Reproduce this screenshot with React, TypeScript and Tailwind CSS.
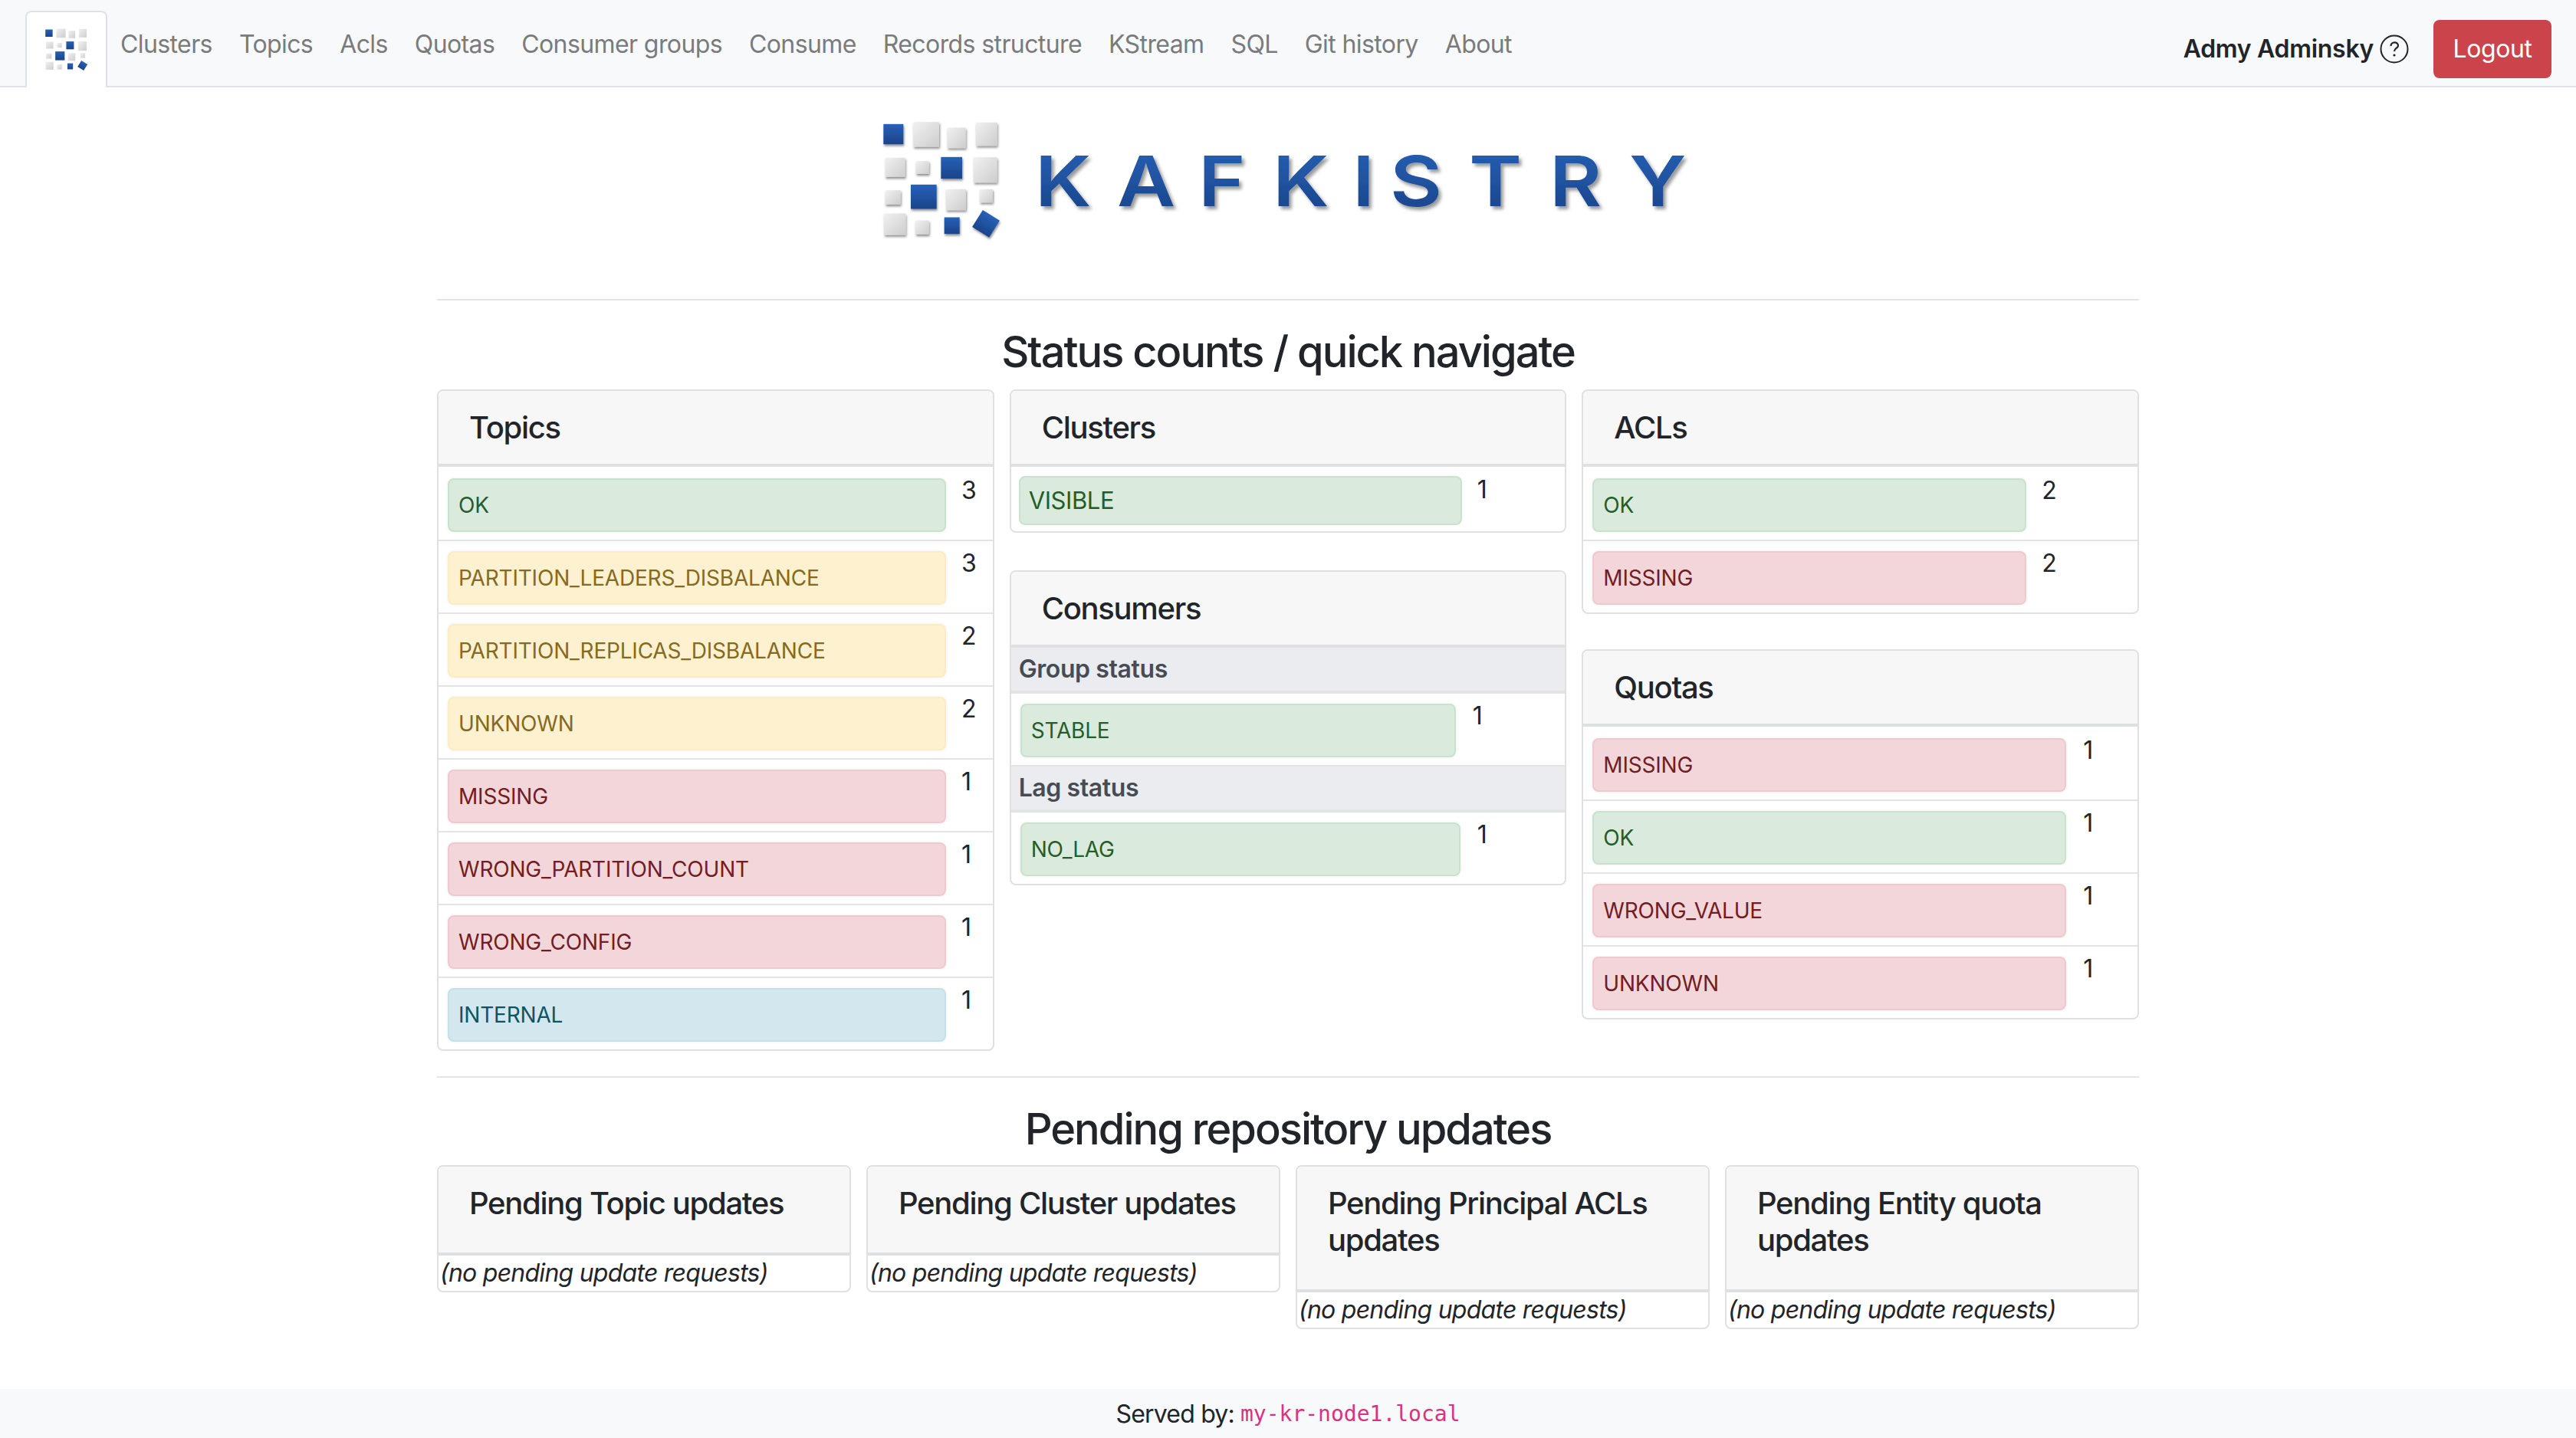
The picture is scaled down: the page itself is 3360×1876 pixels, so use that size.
const navLinks = ["Clusters", "Topics", "Acls", "Quotas", "Consumer groups", "Consume", "Records structure", "KStream", "SQL", "Git history", "About"];

const tones: Record<string, string> = {
  green: "bg-[#daebdd] border-[#c8e2cc] text-[#255d2a]",
  yellow: "bg-[#fdf1d0] border-[#fbecc4] text-[#856a22]",
  red: "bg-[#f2d6d9] border-[#efc9cd] text-[#721c24]",
  blue: "bg-[#d3e8ee] border-[#c3e0e8] text-[#0f5463]",
};

const topics = [
  ["OK", "green", 3],
  ["PARTITION_LEADERS_DISBALANCE", "yellow", 3],
  ["PARTITION_REPLICAS_DISBALANCE", "yellow", 2],
  ["UNKNOWN", "yellow", 2],
  ["MISSING", "red", 1],
  ["WRONG_PARTITION_COUNT", "red", 1],
  ["WRONG_CONFIG", "red", 1],
  ["INTERNAL", "blue", 1],
] as const;

const acls = [
  ["OK", "green", 2],
  ["MISSING", "red", 2],
] as const;

const quotas = [
  ["MISSING", "red", 1],
  ["OK", "green", 1],
  ["WRONG_VALUE", "red", 1],
  ["UNKNOWN", "red", 1],
] as const;

const pending = ["Pending Topic updates", "Pending Cluster updates", "Pending Principal ACLs updates", "Pending Entity quota updates"];

const grays = [
  [187, 55, 101, 97], [320, 77, 72, 80], [432, 57, 83, 91],
  [77, 195, 78, 75], [197, 208, 51, 50], [423, 193, 92, 99],
  [77, 322, 60, 56], [315, 318, 78, 82], [447, 318, 51, 52],
  [72, 413, 85, 84], [195, 440, 53, 55],
];
const blues = [
  [70, 63, 78, 79], [295, 192, 83, 85], [177, 300, 101, 95], [308, 428, 60, 65],
];

function LogoMark({ id, className, shadow }: { id: string; className: string; shadow?: boolean }) {
  return (
    <svg viewBox="60 45 480 475" className={className}>
      <defs>
        <linearGradient id={`${id}-b`} x1="0" y1="0" x2="0" y2="1">
          <stop offset="0" stopColor="#2761b8" />
          <stop offset="1" stopColor="#1b4488" />
        </linearGradient>
        <linearGradient id={`${id}-g`} x1="0" y1="0" x2="1" y2="1">
          <stop offset="0" stopColor="#f1f1f1" />
          <stop offset="1" stopColor="#cdcdcd" />
        </linearGradient>
        <filter id={`${id}-s`} x="-30%" y="-30%" width="170%" height="170%">
          <feDropShadow dx="3" dy="7" stdDeviation="4" floodColor="#000" floodOpacity="0.45" />
        </filter>
      </defs>
      <g filter={shadow ? `url(#${id}-s)` : undefined}>
        {grays.map(([x, y, w, h]) => (
          <rect key={`${x}-${y}`} x={x} y={y} width={w} height={h} fill={`url(#${id}-g)`} />
        ))}
        {blues.map(([x, y, w, h]) => (
          <rect key={`${x}-${y}`} x={x} y={y} width={w} height={h} fill={`url(#${id}-b)`} />
        ))}
        <rect x="432" y="414" width="78" height="78" transform="rotate(32 471 453)" fill={`url(#${id}-b)`} />
      </g>
    </svg>
  );
}

function Logo() {
  return (
    <div className="flex items-start w-[1062px] h-[160px] mx-auto">
      <LogoMark id="big" shadow className="w-[160px] h-[160px] shrink-0" />
      <svg viewBox="0 0 861 130" className="w-[861px] h-[130px] ml-[41px] mt-[16px] shrink-0">
        <defs>
          <linearGradient id="wordmark" x1="0" y1="0" x2="0" y2="1">
            <stop offset="0" stopColor="#2662b8" />
            <stop offset="1" stopColor="#1a4285" />
          </linearGradient>
          <filter id="wordshadow" x="-2%" y="-10%" width="104%" height="130%">
            <feDropShadow dx="3" dy="4" stdDeviation="2" floodColor="#000" floodOpacity="0.4" />
          </filter>
        </defs>
        <text
          transform="scale(1.15 1)"
          x="0 93 185.200 269.600 360 402.600 492.200 583.500 673.900"
          y="98"
          fontFamily="Inter, sans-serif"
          fontWeight="600"
          fontSize="91"
          fill="url(#wordmark)"
          filter="url(#wordshadow)"
        >
          KAFKISTRY
        </text>
      </svg>
    </div>
  );
}

function Row({ label, tone, count, w, gap }: { label: string; tone: string; count: number; w: string; gap: string }) {
  return (
    <div className="flex pl-[12px] pt-[13px] pb-[10px] border-b-2 border-[#e3e4e6] last:border-b-0">
      <div className={`h-[70px] flex items-center px-[12px] border-2 rounded-[8px] shadow-[0_0_0_2px_#fafafa] text-[28px] tracking-[-0.2px] ${w} ${tones[tone]}`}>
        {label}
      </div>
      <div className={`text-[32px] leading-[38px] -mt-[3px] ${gap}`}>{count}</div>
    </div>
  );
}

function CardHead({ title, tall }: { title: string; tall?: boolean }) {
  return (
    <div className={`bg-[#f7f7f7] border-b-4 border-[#dfe0e2] px-[40px] text-[40px] leading-[48px] font-[550] tracking-[-1.3px] ${tall ? "pt-[24px] pb-[40px]" : "pt-[24px] pb-[23px]"}`}>
      {title}
    </div>
  );
}

function SubHead({ title }: { title: string }) {
  return <div className="bg-[#ebecef] border-b-4 border-[#e3e4e6] h-[60px] pl-[10px] flex items-center text-[32px] font-semibold text-[#474c54] tracking-[-0.4px]">{title}</div>;
}

export default function App() {
  return (
    <div className="min-h-[1876px] flex flex-col bg-white text-[#212529] text-[32px] font-['Inter',sans-serif]">
      <nav className="h-[114px] bg-[#f8f9fa] border-b-2 border-[#dee2e6] flex items-end pl-[33px] pr-[32px] shrink-0">
        <div className="w-[107px] h-[100px] -mb-[2px] bg-white border-2 border-b-0 border-[#dee2e6] rounded-t-[8px] flex items-center justify-center">
          <LogoMark id="tab" className="w-[58px] h-[58px]" />
        </div>
        <div className="flex gap-[35px] ml-[17px] h-[112px] pt-[4px] items-center text-[#7a7b7c] tracking-[-0.6px]">
          {navLinks.map((link) => (
            <span key={link}>{link}</span>
          ))}
        </div>
        <div className="ml-auto flex items-center h-[112px] pt-[16px]">
          <span className="font-semibold tracking-[-0.3px]">Admy Adminsky</span>
          <svg viewBox="0 0 38 38" className="w-[38px] h-[38px] ml-[8px]">
            <circle cx="19" cy="19" r="17.500" fill="none" stroke="#212529" strokeWidth="2" />
            <path d="M14.500 15c0-6 9.500-6 9.500-.5 0 3.500-5 3.500-5 7.500" fill="none" stroke="#212529" strokeWidth="2.200" />
            <circle cx="19" cy="27" r="1.600" fill="#212529" />
          </svg>
          <div className="w-[154px] h-[76px] ml-[32px] bg-[#cc444b] rounded-[8px] flex items-center justify-center text-white tracking-[-0.4px]">Logout</div>
        </div>
      </nav>

      <main className="w-[2220px] mx-auto pt-[41px] grow">
        <Logo />
        <hr className="mt-[75px] border-t-2 border-[#e4e4e4]" />
        <h2 className="mt-[34px] mb-[15px] text-center text-[56px] leading-[67px] font-[550] tracking-[-2px]">Status counts / quick navigate</h2>

        <div className="grid grid-cols-3 gap-[20px] items-start">
          <div className="border-2 border-[#e0e0e0] rounded-[8px] overflow-hidden">
            <CardHead title="Topics" />
            <div className="pt-[2px]">
              {topics.map(([label, tone, count]) => (
                <Row key={label} label={label} tone={tone} count={count} w="w-[650px]" gap="ml-[20px]" />
              ))}
            </div>
          </div>

          <div className="flex flex-col gap-[49px]">
            <div className="border-2 border-[#e0e0e0] rounded-[8px] overflow-hidden">
              <CardHead title="Clusters" />
              <div className="flex pl-[10px] pt-[12px] pb-[8px]">
                <div className={`h-[64px] w-[578px] flex items-center px-[11px] border-2 rounded-[8px] text-[31px] tracking-[-0.4px] ${tones.green}`}>VISIBLE</div>
                <div className="ml-[20px] leading-[38px] -mt-[1px]">1</div>
              </div>
            </div>
            <div className="border-2 border-[#e0e0e0] rounded-[8px] overflow-hidden">
              <CardHead title="Consumers" />
              <SubHead title="Group status" />
              <Row label="STABLE" tone="green" count={1} w="w-[568px]" gap="ml-[22px]" />
              <SubHead title="Lag status" />
              <Row label="NO_LAG" tone="green" count={1} w="w-[574px]" gap="ml-[22px]" />
            </div>
          </div>

          <div className="flex flex-col gap-[46px]">
            <div className="border-2 border-[#e0e0e0] rounded-[8px] overflow-hidden">
              <CardHead title="ACLs" />
              <div className="pt-[2px]">
                {acls.map(([label, tone, count]) => (
                  <Row key={label} label={label} tone={tone} count={count} w="w-[566px]" gap="ml-[20px]" />
                ))}
              </div>
            </div>
            <div className="border-2 border-[#e0e0e0] rounded-[8px] overflow-hidden">
              <CardHead title="Quotas" />
              <div className="pt-[2px]">
                {quotas.map(([label, tone, count]) => (
                  <Row key={label} label={label} tone={tone} count={count} w="w-[618px]" gap="ml-[22px]" />
                ))}
              </div>
            </div>
          </div>
        </div>

        <hr className="mt-[33px] border-t-2 border-[#e4e4e4]" />
        <h2 className="mt-[34px] mb-[13px] text-center text-[56px] leading-[67px] font-[550] tracking-[-2px]">Pending repository updates</h2>

        <div className="grid grid-cols-4 gap-[20px] items-start">
          {pending.map((title) => (
            <div key={title} className="border-2 border-[#e0e0e0] rounded-[8px] overflow-hidden">
              <CardHead title={title} tall />
              <div className="h-[46px] pl-[2px] italic leading-[46px] whitespace-nowrap tracking-[-0.75px]">(no pending update requests)</div>
            </div>
          ))}
        </div>
      </main>

      <footer className="h-[64px] bg-[#f8f9fa] flex items-center justify-center gap-[8px] pt-[2px] shrink-0">
        <span className="tracking-[-0.8px]">Served by:</span>
        <code className="font-['DejaVu_Sans_Mono',monospace] text-[28px] text-[#d63384]">my-kr-node1.local</code>
      </footer>
    </div>
  );
}
